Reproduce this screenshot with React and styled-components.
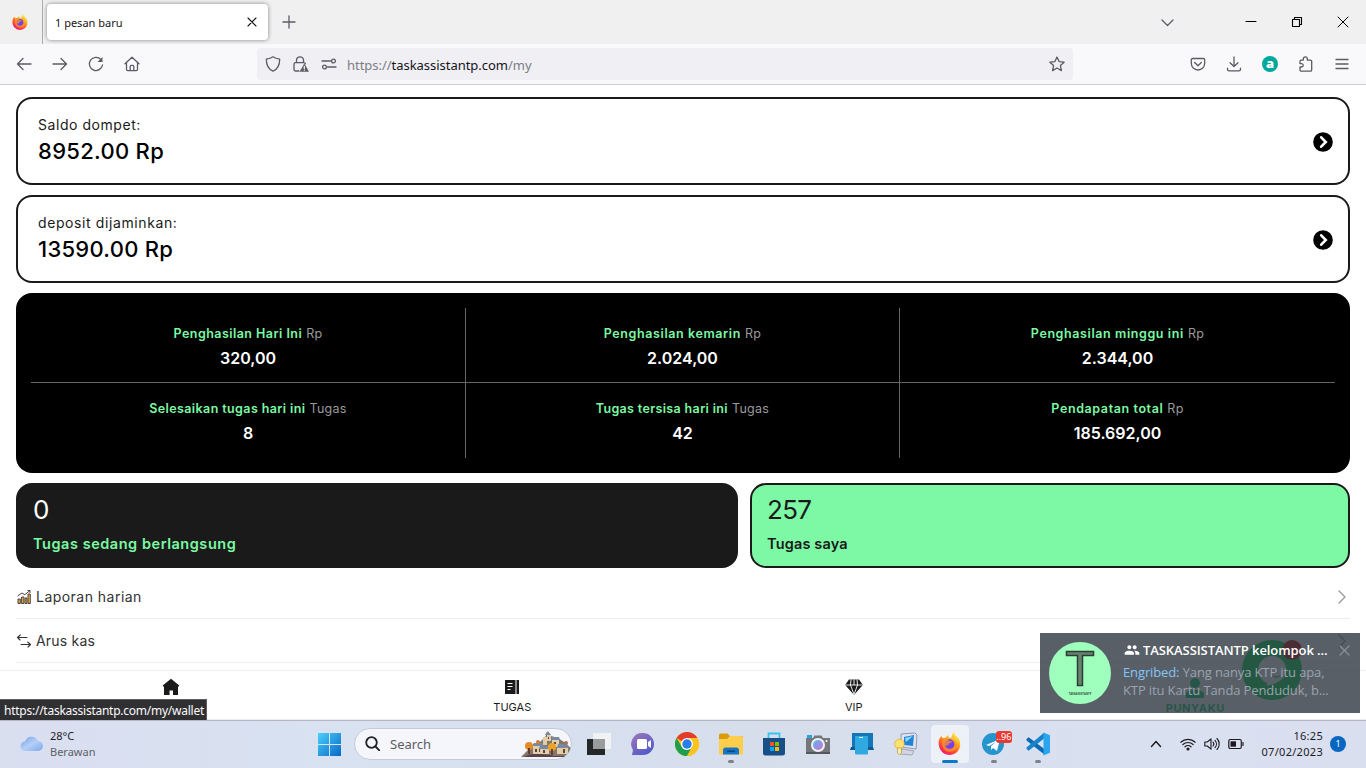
import React from "react";
import styled, { createGlobalStyle } from "styled-components";
import { MdGroup } from "react-icons/md";

const Global = createGlobalStyle`
  * { box-sizing: border-box; }
  body { margin: 0; background: #fff; overflow: hidden; }
  svg { display: block; flex: none; }
`;

const ui = `"Noto Sans", "Open Sans", sans-serif`;
const geo = `Inter, "Liberation Sans", sans-serif`;

const Screen = styled.div`
  position: relative;
  width: 1366px;
  height: 768px;
  display: flex;
  flex-direction: column;
  overflow: hidden;
  font-family: ${geo};
  color: #1a1a1a;
`;

/* Browser chrome */
const TabStrip = styled.header`
  height: 44px;
  flex: none;
  display: flex;
  align-items: center;
  background: #f0f0f0;
  font-family: ${ui};
`;
const PinnedArea = styled.div`
  width: 43px;
  height: 44px;
  padding: 14px 0 0 12px;
  border-right: 1px solid #ababab;
`;
const Tab = styled.div`
  width: 221px;
  height: 36px;
  margin: 0 14px 0 4px;
  padding: 0 11px 0 8px;
  display: flex;
  align-items: center;
  justify-content: space-between;
  background: #fff;
  border-radius: 4px;
  box-shadow: 0 0 4px rgba(0, 0, 0, 0.45);
  font-size: 11px;
  color: #15141a;
`;
const WindowControls = styled.div`
  margin-left: auto;
  display: flex;
  align-items: center;
  padding-right: 17px;
  svg + svg { margin-left: 34px; }
  svg:nth-child(2) { margin-left: 71px; }
`;
const Toolbar = styled.div`
  height: 41px;
  flex: none;
  display: flex;
  align-items: center;
  background: #f9f9fb;
  border-bottom: 1px solid #cccccf;
  font-family: ${ui};
`;
const NavButtons = styled.div`
  width: 257px;
  padding-left: 16px;
  display: flex;
  gap: 20px;
`;
const UrlBar = styled.div`
  width: 816px;
  height: 32px;
  padding: 0 8px;
  display: flex;
  align-items: center;
  gap: 12px;
  background: #f0f0f4;
  border-radius: 4px;
`;
const Url = styled.div`
  flex: 1;
  margin-left: -2px;
  padding-top: 2px;
  font-size: 13px;
  line-height: 20px;
  color: #7d7c84;
  letter-spacing: ${(p) => p.$ls}px;
  b { font-weight: 400; color: #15141a; }
`;
const Actions = styled.div`
  margin-left: auto;
  padding-right: 16px;
  display: flex;
  align-items: center;
  gap: 20px;
`;
const Extension = styled.div`
  width: 16px;
  height: 16px;
  border-radius: 50%;
  background: #00a99b;
  color: #fff;
  font: 800 13px/14px "Open Sans", sans-serif;
  text-align: center;
`;

/* Page */
const Page = styled.main`
  height: 585px;
  flex: none;
  padding: 12px 16px 0;
  display: flex;
  flex-direction: column;
`;
const BalanceCard = styled.section`
  height: 88px;
  flex: none;
  margin-bottom: 10px;
  padding: 2px 15px 0 20px;
  display: flex;
  align-items: center;
  justify-content: space-between;
  border: 2px solid #1a1a1a;
  border-radius: 16px;
`;
const BalanceLabel = styled.div`
  font-size: 14px;
  line-height: 20px;
  margin-top: -2px;
  letter-spacing: ${(p) => p.$ls}px;
`;
const BalanceValue = styled.div`
  font-size: 22px;
  font-weight: 500;
  line-height: 32px;
  color: #000;
  letter-spacing: ${(p) => p.$ls}px;
`;
const StatsPanel = styled.section`
  height: 180px;
  flex: none;
  padding: 15px;
  display: grid;
  grid-template-columns: 435px 434px 435px;
  grid-template-rows: 75px 75px;
  background: #000;
  border-radius: 16px;
`;
const Stat = styled.div`
  padding-top: 16px;
  text-align: center;
  border-right: ${(p) => (p.$right ? "1px solid #666" : "0")};
  border-bottom: ${(p) => (p.$bottom ? "1px solid #666" : "0")};
`;
const StatTitle = styled.div`
  display: flex;
  justify-content: center;
  gap: 4px;
  font-size: 12.5px;
  line-height: 20px;
  font-weight: 600;
  color: #7bf9a3;
  white-space: nowrap;
  letter-spacing: ${(p) => p.$ls}px;
`;
const StatUnit = styled.span`
  font-weight: 400;
  color: #9b9b9b;
  letter-spacing: 0.3px;
`;
const StatValue = styled.div`
  font-size: 16px;
  font-weight: 600;
  line-height: 28px;
  color: #fff;
`;
const TaskRow = styled.div`
  display: flex;
  gap: 12px;
  margin: 10px 0 7px;
`;
const TaskTile = styled.div`
  width: ${(p) => p.$w}px;
  height: 85px;
  padding: 8px 15px;
  border: 2px solid #1a1a1a;
  border-radius: 16px;
  background: ${(p) => (p.$green ? "#7df9a5" : "#1a1a1a")};
  color: ${(p) => (p.$green ? "#1a1a1a" : "#7bf9a3")};
`;
const TaskCount = styled.div`
  font-size: 26px;
  line-height: 34px;
  color: ${(p) => (p.$green ? "#1a1a1a" : "#fff")};
  letter-spacing: ${(p) => p.$ls || 0}px;
`;
const TaskLabel = styled.div`
  margin-top: 6px;
  font-size: 14.5px;
  line-height: 22px;
  font-weight: 600;
  letter-spacing: ${(p) => p.$ls}px;
`;
const MenuItem = styled.div`
  height: 44px;
  flex: none;
  display: flex;
  align-items: center;
  gap: 4px;
  padding-right: 2px;
  border-bottom: 1px solid #ebedf0;
  font-size: 14px;
  color: #323233;
  letter-spacing: ${(p) => p.$ls}px;
  svg:last-child { margin-left: auto; }
`;
const BottomNav = styled.nav`
  height: 50px;
  flex: none;
  display: grid;
  grid-template-columns: repeat(4, 1fr);
  background: #fff;
  border-top: 1px solid #ebedf0;
  border-bottom: 1px solid #ebedf0;
`;
const NavItem = styled.div`
  display: flex;
  flex-direction: column;
  align-items: center;
  padding-top: 7px;
  font-size: 11px;
  line-height: 16px;
  font-weight: ${(p) => (p.$active ? 700 : 400)};
  color: ${(p) => (p.$active ? "#06d268" : "#1a1a1a")};
  letter-spacing: ${(p) => (p.$active ? 0.6 : 0)}px;
  svg { margin-bottom: ${(p) => (p.$active ? 2 : 3)}px; }
`;

/* Overlays */
const ChatButton = styled.div`
  position: absolute;
  left: 1242px;
  top: 640px;
`;
const Toast = styled.aside`
  position: absolute;
  left: 1040px;
  top: 633px;
  width: 320px;
  height: 80px;
  padding: 9px;
  display: flex;
  gap: 12px;
  background: rgba(46, 55, 65, 0.8);
  font-family: "Open Sans", "Noto Sans", sans-serif;
  font-size: 13px;
`;
const ToastText = styled.div`
  width: 216px;
`;
const ToastTitle = styled.div`
  display: flex;
  align-items: center;
  gap: 3px;
  height: 15px;
  padding-left: 1px;
  margin-bottom: 6px;
  font-weight: 600;
  color: #fff;
  white-space: nowrap;
  letter-spacing: ${(p) => p.$ls}px;
`;
const ToastBody = styled.div`
  line-height: 18px;
  white-space: nowrap;
  color: #9aa3ae;
  letter-spacing: ${(p) => p.$ls || 0}px;
  span { color: #86c5f7; }
`;
const ToastClose = styled.div`
  position: absolute;
  right: 10px;
  top: 12px;
`;
const LinkPreview = styled.div`
  position: absolute;
  left: 0;
  top: 699px;
  width: 207px;
  height: 21px;
  padding-left: 4px;
  background: #303033;
  border: solid #5c5c61;
  border-width: 1px 1px 0 0;
  font: 12px/21px ${ui};
  color: #fbfbfe;
  white-space: nowrap;
  letter-spacing: ${(p) => p.$ls}px;
`;

/* Taskbar */
const Taskbar = styled.footer`
  height: 48px;
  flex: none;
  display: flex;
  align-items: center;
  padding-bottom: 2px;
  border-top: 1px solid #b3b7c4;
  background: linear-gradient(90deg, #dadff0, #d8e2f1 25%, #d6deec 55%, #d9e1f0 80%, #dadff0);
  font-family: ${ui};
`;
const Weather = styled.div`
  width: 317px;
  padding-left: 19px;
  display: flex;
  align-items: center;
  gap: 7px;
  font-size: 11px;
  line-height: 16px;
  color: #5d5f66;
  b { display: block; font-weight: 400; color: #1b1b1f; }
`;
const SearchPill = styled.div`
  width: 218px;
  height: 32px;
  margin: 0 5px 0 12px;
  padding-left: 10px;
  display: flex;
  align-items: center;
  gap: 10px;
  background: #f4f6fb;
  border: 1px solid #c6cad8;
  border-radius: 16px;
  overflow: hidden;
  font-size: 13px;
  color: #5c5d62;
  svg:last-child { margin-left: auto; }
`;
const AppSlot = styled.div`
  position: relative;
  width: 38px;
  height: 38px;
  margin: 0 2.95px;
  display: flex;
  align-items: center;
  justify-content: center;
  border-radius: 4px;
  background: ${(p) => (p.$active ? "rgba(255,255,255,.55)" : "transparent")};
  &::after {
    content: "";
    display: ${(p) => (p.$active || p.$running ? "block" : "none")};
    position: absolute;
    bottom: 0;
    width: ${(p) => (p.$active ? 16 : 6)}px;
    height: 3px;
    border-radius: 2px;
    background: ${(p) => (p.$active ? "#0b78d0" : "#808289")};
  }
`;
const AppGroup = styled.div`
  display: flex;
`;
const Badge = styled.span`
  position: absolute;
  right: 1px;
  top: 6px;
  width: 16px;
  height: 12px;
  border-radius: 3px;
  background: #e83a33;
  color: #fff;
  font-size: 9px;
  line-height: 12px;
  text-align: center;
`;
const Tray = styled.div`
  margin-left: auto;
  padding-right: 20px;
  display: flex;
  align-items: center;
`;
const TrayIcons = styled.div`
  display: flex;
  align-items: center;
  gap: 8px;
  margin: 0 16px 0 18px;
`;
const Clock = styled.div`
  width: 63px;
  font-size: 11px;
  line-height: 16px;
  text-align: right;
  color: #1b1b1f;
  white-space: nowrap;
  letter-spacing: ${(p) => p.$ls || 0}px;
`;
const Count = styled.div`
  width: 16px;
  height: 16px;
  margin-left: 7px;
  border-radius: 50%;
  background: #0767c0;
  color: #fff;
  font-size: 9px;
  line-height: 16px;
  text-align: center;
`;

const Line = ({ w = 16, h = w, box, c = "#5b5b66", sw = 1.3, children }) => (
  <svg width={w} height={h} viewBox={box || `0 0 ${w} ${h}`} fill="none" stroke={c} strokeWidth={sw} strokeLinecap="round" strokeLinejoin="round">
    {children}
  </svg>
);

const Firefox = ({ size, id }) => (
  <svg width={size} height={size} viewBox="0 0 24 24">
    <defs>
      <linearGradient id={id} x1=".85" y1=".05" x2=".3" y2="1">
        <stop offset="0" stopColor="#fff14f" />
        <stop offset=".35" stopColor="#ffb01f" />
        <stop offset=".65" stopColor="#ff5a2c" />
        <stop offset="1" stopColor="#ee1670" />
      </linearGradient>
    </defs>
    <path fill={`url(#${id})`} d="M3.5 4.2c.3 1 .8 1.7 1.5 2.2 1-.5 2-.6 3-.4C8.600 4.600 9.800 3.700 11.200 3.400c-.5.700-.6 1.500-.2 2.200l3 .4c.4-2.400.9-4.500 2.300-6 .3 1.900 1.500 3 2.800 4.300.7.8 1.100 1.500 1.200 2.300l.7-.8c3.200 5.300 2.900 11-1.100 15-4.200 4.100-11 4.200-15.300.300C.600 17.400-.1 12 1.300 7.600c.5-1.300 1.200-2.400 2.200-3.400z" />
    <circle cx="12" cy="12.800" r="5.200" fill="#7542e5" />
    <path d="M4.500 8c2.700-1.800 5.800-.8 7.400 1.200l3.200.6c-.8 1.500-2.300 1.300-3.300 2-.8.700-.4 2.200-2.100 2.400-1.300.2-2.300-.5-2.300-.5.300 2.300 2.100 3.700 4.500 3.900 2.700.2 5-1.600 5.500-4.300.2-2-.6-3.500-1.900-4.700 2.700 1 4.500 3.400 4.300 6.100-.3 3.600-3.500 6-7.700 5.800C6.800 20.300 3.500 16.500 4.500 8z" fill="#ff9a24" opacity=".7" />
  </svg>
);

const ArrowBadge = () => (
  <svg width="20" height="20" viewBox="0 0 20 20">
    <circle cx="10" cy="10" r="9.800" fill="#000" />
    <path d="M8.200 5.300 12.800 10l-4.600 4.700" fill="none" stroke="#fff" strokeWidth="2.600" strokeLinecap="round" strokeLinejoin="miter" />
  </svg>
);

const Chevron = () => (
  <Line w={12} h={16} c="#969799" sw={1.3}><path d="m3 2 6 6-6 6" /></Line>
);

const Village = () => (
  <svg width="50" height="26" viewBox="0 0 50 26">
    <path d="M0 26 8 18 12 15l6-3 6-6 3-5 3 4 7 2 6 4 7 6v13z" fill="#82756b" />
    <path d="M3 26c8-5 20-3 30-1h17v1z" fill="#54434a" />
    <path d="M12 14h9v9h-9zM22 6h4v8h-4zM26 3h4v7h-4zM31 8h7v8h-7zM20 17h8v6h-8zM36 16h11v7H36z" fill="#e2cda8" />
    <path d="M13 12h8l2 3H11zM25 2l2-2 3 4h-6zM31 6h7l1 3h-9zM19 15h9l1 3h-11zM37 13h9l2 4H36z" fill="#7889a2" />
    <path d="M14 18h2v3h-2zM18 18h1v3h-1zM22 19h2v3h-2zM33 11h2v2h-2zM42 18h2v4h-2zM27 6h1v2h-1z" fill="#5b4440" />
    <circle cx="8" cy="15" r="4" fill="#e58b2a" /><circle cx="31" cy="16" r="4" fill="#eda126" />
    <path d="M7 17h2v6H7zM30 18h2v6h-2z" fill="#693d29" /><circle cx="17" cy="11" r="2" fill="#d47a35" /><circle cx="45" cy="12" r="2" fill="#a7704e" />
  </svg>
);

const apps = [
  { name: "taskview", art: (
    <svg width="24" height="24" viewBox="0 0 24 24">
      <path d="M0 7h18v16H0z" fill="#252829" /><path d="M6 1h18v16H6z" fill="#f1f2f4" /><path d="M6 7h12v10H6z" fill="#9b9c9e" />
    </svg>) },
  { name: "chat", art: (
    <svg width="24" height="24" viewBox="0 0 24 24">
      <defs><linearGradient id="chat" x2=".7" y2="1"><stop stopColor="#a078b8" /><stop offset="1" stopColor="#5059c9" /></linearGradient></defs>
      <path d="M12 1a11 11 0 1 1 0 22H1l1-5A11 11 0 0 1 12 1z" fill="url(#chat)" />
      <rect x="6" y="7" width="10" height="10" rx="1.500" fill="#fff" /><path d="m17 10 3-2v8l-3-2z" fill="#fff" />
    </svg>) },
  { name: "chrome", art: (
    <svg width="24" height="24" viewBox="0 0 24 24">
      <circle cx="12" cy="12" r="12" fill="#fcc31e" />
      <path d="M12 12 1.600 6A12 12 0 0 1 22.400 6z" fill="#e33b2e" />
      <path d="M1.600 6A12 12 0 0 0 12 24l5.200-9L12 12 6.800 15z" fill="#1e9d4b" />
      <path d="M12 6h10.400A12 12 0 0 1 12 24l5.200-9z" fill="#fcc31e" />
      <circle cx="12" cy="12" r="6" fill="#fff" /><circle cx="12" cy="12" r="4.700" fill="#2b7de9" />
    </svg>) },
  { name: "explorer", running: true, art: (
    <svg width="24" height="24" viewBox="0 0 24 24">
      <path d="M0 3a1.500 1.500 0 0 1 1.500-1.500h7L11 4H24v8H0z" fill="#d99b0c" />
      <path d="M0 7h8l3-3h12l1 1v17.500H0z" fill="#fdce4c" />
      <path d="M4 22.500V18c0-1.500 1-2.500 2.500-2.500h11c1.500 0 2.500 1 2.500 2.500v4.500z" fill="#1673c5" /><path d="M8 18.500h8V20H8z" fill="#064981" />
    </svg>) },
  { name: "store", art: (
    <svg width="24" height="24" viewBox="0 0 24 24">
      <path d="M6.500 8V1.500h11V8" fill="none" stroke="#35c4f2" strokeWidth="1.800" />
      <path d="M1 6h22v15a2.500 2.500 0 0 1-2.500 2.500h-17A2.500 2.500 0 0 1 1 21z" fill="#174f86" />
      <path d="M8 10h4v4H8z" fill="#f35325" /><path d="M13 10h4v4h-4z" fill="#81bc06" /><path d="M8 15h4v4H8z" fill="#05a6f0" /><path d="M13 15h4v4h-4z" fill="#ffba08" />
    </svg>) },
  { name: "camera", art: (
    <svg width="24" height="24" viewBox="0 0 24 24">
      <defs><linearGradient id="lens" x2="1" y2="1"><stop stopColor="#53b9ee" /><stop offset="1" stopColor="#cf6fd5" /></linearGradient></defs>
      <path d="M1 3h5v4H1z" fill="#29a3df" />
      <path d="M0 6h7l1.500-2.500h7L17 6h7v16H0z" fill="#75787b" /><path d="M0 20h24v2H0z" fill="#55585b" />
      <circle cx="12" cy="13" r="7" fill="#f0f1f4" /><circle cx="12" cy="13" r="5" fill="url(#lens)" /><circle cx="20.500" cy="9" r="1" fill="#fff" />
    </svg>) },
  { name: "phone", art: (
    <svg width="24" height="24" viewBox="0 0 24 24">
      <path d="M2 1h21v17H2z" fill="#1476b9" /><path d="M1 15h22l1 3H0z" fill="#0b589b" /><rect x="5" y="4" width="13" height="18.500" rx="1" fill="#30a9e0" /><path d="M9 5.500h4" stroke="#d9f4ff" strokeWidth="1" />
    </svg>) },
  { name: "computer", art: (
    <svg width="24" height="24" viewBox="0 0 24 24">
      <path d="m7 2 14-1 2 2-1 14-15-2z" fill="#e0e3ee" stroke="#9299b2" /><path d="m10 5 10-2-1 11-9-1z" fill="#2384d6" /><path d="m11 6 8-2-7 6z" fill="#8cdcff" />
      <path d="m8 17 12 2-2 4-12-1z" fill="#d4d7e2" stroke="#a1a5b7" />
      <circle cx="5.500" cy="12" r="4.800" fill="#ffe16e" stroke="#e1a832" strokeWidth=".7" /><path d="M3.500 16h4v5c-1 1.500-3 1.500-4 0z" fill="#fff0a8" stroke="#b8923f" strokeWidth=".7" />
    </svg>) },
  { name: "firefox", active: true, art: <Firefox size={23} id="fxLarge" /> },
  { name: "telegram", running: true, badge: "..96", art: (
    <svg width="24" height="24" viewBox="0 0 24 24">
      <circle cx="11" cy="12" r="11" fill="#2595ce" /><path d="m4 13 14-6-3 12-4-3-2 2v-4l5-4-7 4z" fill="#fff" />
    </svg>) },
  { name: "vscode", running: true, art: (
    <svg width="24" height="24" viewBox="0 0 24 24">
      <path d="m.5 7 2.200-1.800L19 17.500V23L.5 8.500z" fill="#096ab3" /><path d="M.5 15.500 18 .8V6.500L2.700 18.800.5 17z" fill="#1684cb" />
      <path d="m17.500.5 6.500 2.800v17.400l-6.500 2.800z" fill="#2ba5ee" />
    </svg>) },
];

const stats = [
  ["Penghasilan Hari Ini", "Rp", "320,00", 0.46],
  ["Penghasilan kemarin", "Rp", "2.024,00", 0.6],
  ["Penghasilan minggu ini", "Rp", "2.344,00", 0.6],
  ["Selesaikan tugas hari ini", "Tugas", "8", 0.4],
  ["Tugas tersisa hari ini", "Tugas", "42", 0.35],
  ["Pendapatan total", "Rp", "185.692,00", 0.6],
];

export default function App() {
  return (
    <Screen>
      <Global />
      <TabStrip>
        <PinnedArea><Firefox size={16} id="fxSmall" /></PinnedArea>
        <Tab><span>1 pesan baru</span><Line w={10} c="#15141a" sw={1.1}><path d="m1 1 8 8m0-8-8 8" /></Line></Tab>
        <Line w={14}><path d="M7 1v12M1 7h12" /></Line>
        <WindowControls>
          <Line w={13} c="#5b5b66"><path d="m1 4 5.500 5.500L12 4" /></Line>
          <Line w={12} c="#000" sw={1}><path d="M1 5.500h10" /></Line>
          <Line w={12} c="#000" sw={1.1}><path d="M1.500 3.500h7v7h-7zM3.500 3.500v-2h7v7h-2" /></Line>
          <Line w={12} c="#000" sw={1}><path d="m1 1 10 10m0-10L1 11" /></Line>
        </WindowControls>
      </TabStrip>

      <Toolbar>
        <NavButtons>
          <Line><path d="M15 8H1.500M7 2.500 1.500 8 7 13.500" /></Line>
          <Line><path d="M1 8h13.500M9 2.500 14.500 8 9 13.500" /></Line>
          <Line><path d="M14.500 9A6.600 6.600 0 1 1 12.800 3.400" /><path d="M14.500 1v5h-5z" fill="#5b5b66" stroke="none" /></Line>
          <Line><path d="M1 7.800 8 1.200l7 6.600M2.500 6.800v6.500c0 .8.500 1.300 1.300 1.300h8.400c.8 0 1.300-.5 1.300-1.300V6.800M6.200 14.500v-4c0-.8.400-1.200 1-1.200h1.600c.6 0 1 .4 1 1.200v4" /></Line>
        </NavButtons>
        <UrlBar>
          <Line><path d="M8 .8c2 1.400 4 2 6.700 2.400 0 5.500-1.800 9.800-6.700 12-4.900-2.200-6.700-6.500-6.700-12C4 2.800 6 2.200 8 .8z" /></Line>
          <Line><path d="M3.500 6.500V4.300a3.500 3.500 0 0 1 7 0v2.200M6 15H2.600A1.600 1.600 0 0 1 1 13.400V8.200c0-.9.7-1.600 1.600-1.600h8.300c.8 0 1.300.5 1.500 1.200" /><path d="M11.300 7.500 16 15.800H6.600z" fill="#5b5b66" stroke="none" /><path d="M11.300 10.500v2M11.300 14.200v.1" stroke="#f0f0f4" sw="1" /></Line>
          <Line><path d="M1 5h8.500M6.500 11H15" /><circle cx="12.500" cy="5" r="1.900" /><circle cx="3.500" cy="11" r="1.900" /></Line>
          <Url $ls={-0.03}>https://<b>taskassistantp.com</b>/my</Url>
          <Line><path d="m8 1 2.100 4.600 5 .6-3.700 3.400 1 5L8 12l-4.400 2.600 1-5L.9 6.200l5-.6z" /></Line>
        </UrlBar>
        <Actions>
          <Line><path d="M2.600 2.500h10.800c.8 0 1.300.5 1.300 1.300v3.500A6.700 6.700 0 0 1 8 14a6.700 6.700 0 0 1-6.700-6.700V3.800c0-.8.500-1.300 1.300-1.300zM4.700 6.500 8 9.700l3.300-3.200" /></Line>
          <Line><path d="M8 .8v9.500M4 6.700l4 3.800 4-3.800M1.500 12.200v1c0 1 .6 1.600 1.600 1.600h9.800c1 0 1.600-.6 1.600-1.600v-1" /></Line>
          <Extension>a</Extension>
          <Line><path d="M2 5.200c0-.7.400-1.100 1.100-1.100h2.200V2.900a2 2 0 0 1 4 0v1.200h3.100c.8 0 1.300.4 1.300 1.200v8.600c0 .8-.5 1.300-1.300 1.300H3.300c-.8 0-1.300-.5-1.300-1.300V11h1.500a1.700 1.700 0 0 0 0-3.400H2z" /></Line>
          <Line><path d="M2 3.500h12M2 8h12M2 12.500h12" /></Line>
        </Actions>
      </Toolbar>

      <Page>
        <BalanceCard>
          <div><BalanceLabel $ls={0.55}>Saldo dompet:</BalanceLabel><BalanceValue $ls={0.3}>8952.00 Rp</BalanceValue></div>
          <ArrowBadge />
        </BalanceCard>
        <BalanceCard>
          <div><BalanceLabel $ls={0.6}>deposit dijaminkan:</BalanceLabel><BalanceValue $ls={0.27}>13590.00 Rp</BalanceValue></div>
          <ArrowBadge />
        </BalanceCard>
        <StatsPanel>
          {stats.map(([title, unit, value, ls], i) => (
            <Stat key={title} $right={i % 3 !== 2} $bottom={i < 3}>
              <StatTitle $ls={ls}><span>{title}</span><StatUnit>{unit}</StatUnit></StatTitle>
              <StatValue>{value}</StatValue>
            </Stat>
          ))}
        </StatsPanel>
        <TaskRow>
          <TaskTile $w={722}><TaskCount>0</TaskCount><TaskLabel $ls={0.54}>Tugas sedang berlangsung</TaskLabel></TaskTile>
          <TaskTile $w={600} $green><TaskCount $green $ls={-0.7}>257</TaskCount><TaskLabel $ls={0.15}>Tugas saya</TaskLabel></TaskTile>
        </TaskRow>
        <MenuItem $ls={0.47}>
          <svg width="16" height="16" viewBox="0 0 16 16" fill="#eaa955" stroke="#39352f" strokeWidth=".9"><path d="M2 10h2.300v4.500H2zM5.600 8h2.300v6.500H5.600zM9 9h2v5.500H9zM12 5h2.300v9.500H12z" /><path d="m1.500 7 4.500-3 2.800 1.700L14 1.500M11.500 1.500H14V4" fill="none" /></svg>
          <span>Laporan harian</span><Chevron />
        </MenuItem>
        <MenuItem $ls={0.2}>
          <Line c="#323233" sw={1.1}><path d="M11 4.500H1.500L4.300 2M1.500 4.500 4 7M5 11.500h9.500L11.700 9M14.500 11.500 12 14" /></Line>
          <span>Arus kas</span><Chevron />
        </MenuItem>
      </Page>

      <BottomNav>
        <NavItem>
          <svg width="18" height="18" viewBox="0 0 18 18" fill="#1a1a1a"><path d="m9 .8 8.300 6.800-.5 1H16V17h-5v-4.500H7.500V17H2V8.600h-.8l-.5-1z" /></svg>
        </NavItem>
        <NavItem>
          <svg width="18" height="18" viewBox="0 0 18 18"><path d="M2 2h14v14H2z" fill="#1a1a1a" /><path d="M13 2v14" stroke="#fff" strokeWidth="1" /><path d="M4.500 5.500h5M4.500 8.500h5M4.500 11.500h3" stroke="#fff" strokeWidth="1.200" /></svg>
          TUGAS
        </NavItem>
        <NavItem>
          <svg width="18" height="18" viewBox="0 0 18 18"><path d="M4 1.500h10L17.800 7 9 17 .2 7z" fill="#1a1a1a" /><path d="M.5 7h17M6 1.500 5.500 7 9 16.500 12.500 7 12 1.500M9 1.500V7" stroke="#fff" strokeWidth=".9" fill="none" /></svg>
          VIP
        </NavItem>
        <NavItem $active>
          <svg width="18" height="20" viewBox="0 0 18 20" fill="#06d268"><circle cx="9" cy="5" r="5" /><path d="M0 20v-3c0-4 4-5 9-5s9 1 9 5v3z" /></svg>
          PUNYAKU
        </NavItem>
      </BottomNav>

      <ChatButton>
        <svg width="62" height="60" viewBox="0 0 62 60"><circle cx="30" cy="30" r="30" fill="#02db48" /><path d="M30 16a14 14 0 0 1 14 14c0 7-5 10-10 13l-9 3v-3a14 14 0 0 1 5-27z" fill="#fff" /><path d="M30 35q4 3 8 0v1q-4 4-8 0z" fill="#02db48" /><circle cx="50" cy="10" r="10" fill="#b90000" /></svg>
      </ChatButton>
      <Toast>
        <svg width="62" height="62" viewBox="0 0 62 62">
          <circle cx="31" cy="31" r="31" fill="#9fffbd" />
          <path d="M17.500 9.500h27v4h-11v30h-5v-30h-11z" fill="#64846f" stroke="#303b35" strokeWidth="1.500" />
          <text x="31" y="52.500" textAnchor="middle" fontSize="2.700" fontFamily="Open Sans" fontWeight="700" fill="#35533f">TASKASSISTANTP</text>
        </svg>
        <ToastText>
          <ToastTitle $ls={-0.08}><MdGroup size={16} /><span>TASKASSISTANTP kelompok ...</span></ToastTitle>
          <ToastBody $ls={-0.12}><span>Engribed:</span> Yang nanya KTP itu apa,</ToastBody>
          <ToastBody $ls={-0.12}>KTP itu Kartu Tanda Penduduk, b...</ToastBody>
        </ToastText>
        <ToastClose><Line w={11} c="#8b929c" sw={1.2}><path d="m1 1 9 9m0-9-9 9" /></Line></ToastClose>
      </Toast>
      <LinkPreview $ls={-0.25}>https://taskassistantp.com/my/wallet</LinkPreview>

      <Taskbar>
        <Weather>
          <svg width="24" height="17" viewBox="0 0 24 17">
            <defs><linearGradient id="cloud" x2="1" y2="1"><stop stopColor="#719eea" /><stop offset=".5" stopColor="#b5d0f6" /><stop offset="1" stopColor="#7da7ec" /></linearGradient></defs>
            <path d="M5 16a5 5 0 0 1 0-9.500h1a7 7 0 0 1 13-.5 5 5 0 0 1 0 10z" fill="url(#cloud)" />
          </svg>
          <div><b>28°C</b>Berawan</div>
        </Weather>
        <svg width="25" height="24" viewBox="0 0 25 24">
          <defs><linearGradient id="win" x2="1" y2="1"><stop stopColor="#4bd0fb" /><stop offset="1" stopColor="#0668c7" /></linearGradient></defs>
          <path d="M1 1h11v11H1zM13 1h11v11H13zM1 13h11v11H1zM13 13h11v11H13z" fill="url(#win)" />
        </svg>
        <SearchPill>
          <Line w={15} c="#202024" sw={1.800}><circle cx="6.500" cy="6.500" r="5.300" /><path d="m10.500 10.500 3.800 3.800" /></Line>
          <span>Search</span><Village />
        </SearchPill>
        <AppGroup>
          {apps.map((a) => (
            <AppSlot key={a.name} $active={a.active} $running={a.running}>{a.art}{a.badge && <Badge>{a.badge}</Badge>}</AppSlot>
          ))}
        </AppGroup>
        <Tray>
          <Line w={12} c="#1b1b1f" sw={1.400}><path d="m1.500 8.500 4.500-5 4.500 5" /></Line>
          <TrayIcons>
            <Line c="#1b1b1f" sw={1.200}><path d="M.8 6.200a10.500 10.500 0 0 1 14.400 0M2.900 8.500a7.500 7.500 0 0 1 10.200 0M5 10.800a4.300 4.300 0 0 1 6 0" /><circle cx="8" cy="13" r="1" fill="#1b1b1f" /></Line>
            <Line c="#1b1b1f" sw={1.100}><path d="M.8 6h2.500L7 2.800v10.400L3.300 10H.8zM9 6a3 3 0 0 1 0 4M11 4.300a5.500 5.500 0 0 1 0 7.400M13 2.500a8 8 0 0 1 0 11" /></Line>
            <Line c="#1b1b1f" sw={1.200}><rect x=".8" y="3.500" width="12.500" height="9" rx="1.500" /><path d="M15 6.500v3" /><path d="M2.500 5.300h5.500v5.400H2.500z" fill="#1b1b1f" stroke="none" /></Line>
          </TrayIcons>
          <Clock $ls={0.3}>16:25<br />07/02/2023</Clock>
          <Count>1</Count>
        </Tray>
      </Taskbar>
    </Screen>
  );
}
